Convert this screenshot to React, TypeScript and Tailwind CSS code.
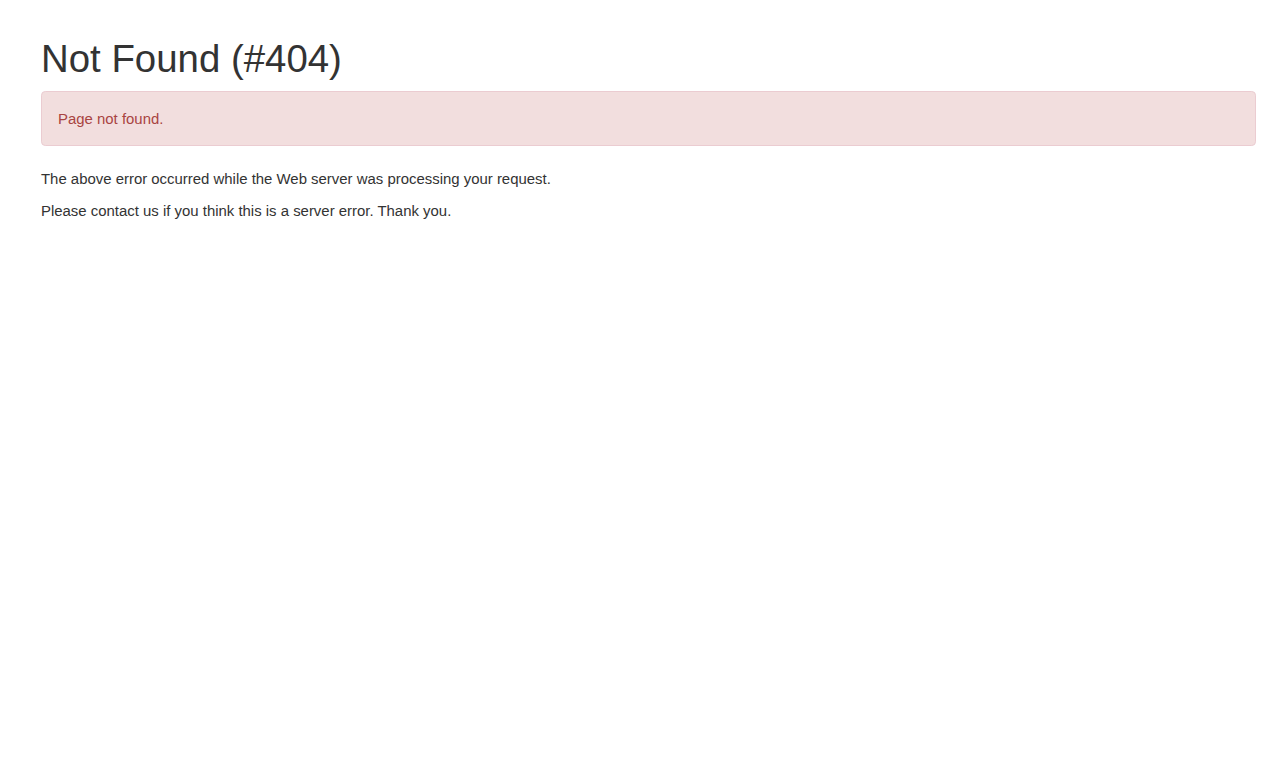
export default function App() {
  return (
    <div className="min-h-screen bg-white pl-[41px] pr-[24px] pt-[38px] text-[14.93px] leading-[21.33px] text-[#333] [font-family:'Liberation_Sans',Arial,sans-serif]">
      <h1 className="mb-[10.67px] text-[38.4px] leading-[42.24px] font-normal">Not Found (#404)</h1>
      <div className="mb-[21.33px] rounded-[4.27px] border border-[#ebccd1] bg-[#f2dede] p-[16px] text-[#a94442]">
        Page not found.
      </div>
      <p className="mb-[10.67px]">The above error occurred while the Web server was processing your request.</p>
      <p className="mb-[10.67px]">Please contact us if you think this is a server error. Thank you.</p>
    </div>
  )
}
